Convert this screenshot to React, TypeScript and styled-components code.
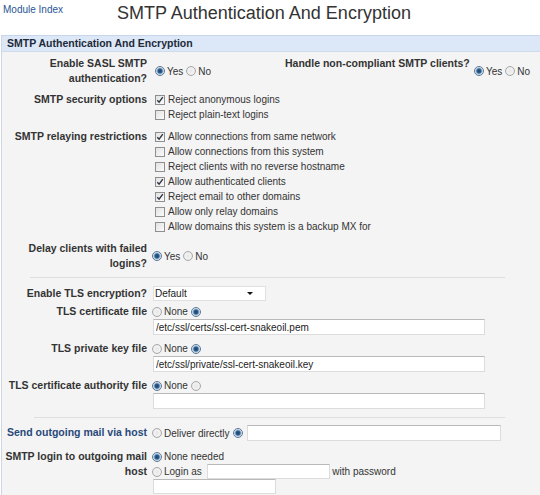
import React from 'react';
import styled, { createGlobalStyle } from 'styled-components';

const GlobalStyle = createGlobalStyle`
  body {
    margin: 0;
    background: #ffffff;
    font-family: "Liberation Sans", Arial, sans-serif;
    font-size: 10px;
    color: #333333;
    overflow: hidden;
  }
`;

const Page = styled.div`
  width: 540px;
  height: 495px;
  overflow: hidden;
`;

const TopBar = styled.div`
  display: grid;
  grid-template-columns: 92px 1fr 104px;
  align-items: start;
  height: 35px;
`;

const ModuleLink = styled.a`
  color: #2a5594;
  text-decoration: none;
  padding: 3px 0 0 3px;
  line-height: 14px;
`;

const Title = styled.h1`
  margin: 0;
  padding-top: 2px;
  font-size: 18px;
  font-weight: normal;
  line-height: 22px;
  text-align: center;
  color: #333333;
  white-space: nowrap;
`;

const Panel = styled.div`
  margin-left: 1px;
  margin-right: -10px;
  border-left: 1px solid #d0d6df;
`;

const PanelHeader = styled.div`
  background: #dce7f7;
  border-top: 1px solid #c8d6ec;
  border-bottom: 1px solid #cfdaea;
  padding: 0 5px;
  height: 15px;
  line-height: 15px;
  font-size: 10.5px;
  font-weight: bold;
  color: #222a38;
`;

const PanelBody = styled.div`
  background: #f4f4f4;
  padding: 1px 0 10px;
`;

const Row = styled.div<{ $cols?: string; $top?: number; $bottom?: number }>`
  display: grid;
  grid-template-columns: ${p => p.$cols || '149px 1fr'};
  padding: ${p => p.$top ?? 3}px 0 ${p => p.$bottom ?? 3}px;
`;

const Label = styled.div<{ $link?: boolean }>`
  text-align: right;
  font-size: 10.5px;
  font-weight: bold;
  padding-right: 4px;
  line-height: 15px;
  white-space: nowrap;
  color: ${p => (p.$link ? '#27497a' : '#333333')};
`;

const Control = styled.div<{ $middle?: boolean; $indent?: number }>`
  display: flex;
  flex-direction: column;
  justify-content: ${p => (p.$middle ? 'center' : 'flex-start')};
  padding-left: ${p => p.$indent ?? 0}px;
`;

const Line = styled.div`
  display: flex;
  align-items: center;
  min-height: 15px;
  line-height: 15px;
  white-space: nowrap;
`;

const RadioDot = styled.span<{ $on?: boolean; $gap?: boolean }>`
  box-sizing: border-box;
  display: inline-block;
  flex: none;
  width: 10px;
  height: 10px;
  margin: 0 2px 0 ${p => (p.$gap ? 3 : 1)}px;
  border-radius: 50%;
  border: 1px solid ${p => (p.$on ? '#5b7896' : '#a9a9a9')};
  background: ${p =>
    p.$on
      ? 'radial-gradient(circle, #1e3f66 0, #2d5f8e 2px, #9ab7d3 3px, #eef2f6 4px)'
      : 'radial-gradient(circle, #e6e6e6 0, #f2f2f2 3px, #dcdcdc 5px)'};
`;

const CheckBox = styled.span`
  box-sizing: border-box;
  display: inline-flex;
  align-items: center;
  justify-content: center;
  flex: none;
  width: 10px;
  height: 10px;
  margin: 0 3px 0 4px;
  border: 1px solid #8f8f8f;
  background: linear-gradient(135deg, #e2e2e2, #fbfbfb);
`;

const TextField = styled.input<{ $w: number; $h?: number }>`
  box-sizing: border-box;
  width: ${p => p.$w}px;
  height: ${p => p.$h ?? 16}px;
  margin: 0 0 0 2px;
  padding: 0 2px;
  border: 1px solid #dcdcdc;
  border-top-color: #b9b9b9;
  background: #ffffff;
  font-family: inherit;
  font-size: 10px;
  color: #222222;
  outline: none;
`;

const SelectBox = styled.span`
  position: relative;
  box-sizing: border-box;
  display: inline-block;
  width: 113px;
  height: 15px;
  line-height: 13px;
  margin-left: 2px;
  padding-left: 1px;
  border: 1px solid #e0e0e0;
  background: #ffffff;
  color: #222222;

  &::after {
    content: '';
    position: absolute;
    right: 12px;
    top: 5px;
    border-left: 3px solid transparent;
    border-right: 3px solid transparent;
    border-top: 3px solid #111111;
  }
`;

const Separator = styled.div<{ $left: number; $top: number; $bottom: number }>`
  height: 1px;
  background: #dedede;
  margin: ${p => p.$top}px 45px ${p => p.$bottom}px ${p => p.$left}px;
`;

const Radio = ({ on, gap }: { on?: boolean; gap?: boolean }) => <RadioDot $on={on} $gap={gap} />;

const Check = ({ on }: { on?: boolean }) => (
  <CheckBox>
    {on && (
      <svg width="8" height="8" viewBox="0 0 8 8">
        <path d="M1.3 4.2 L3.1 6.2 L6.8 1.2" fill="none" stroke="#2b3440" strokeWidth="1.4" />
      </svg>
    )}
  </CheckBox>
);

const relaying: [string, boolean][] = [
  ['Allow connections from same network', true],
  ['Allow connections from this system', false],
  ['Reject clients with no reverse hostname', false],
  ['Allow authenticated clients', true],
  ['Reject email to other domains', true],
  ['Allow only relay domains', false],
  ['Allow domains this system is a backup MX for', false],
];

export default function App() {
  return (
    <Page>
      <GlobalStyle />
      <TopBar>
        <ModuleLink href="#">Module Index</ModuleLink>
        <Title>SMTP Authentication And Encryption</Title>
        <div />
      </TopBar>

      <Panel>
        <PanelHeader>SMTP Authentication And Encryption</PanelHeader>
        <PanelBody>
          <Row $cols="149px 134px 185px 1fr">
            <Label>Enable SASL SMTP<br />authentication?</Label>
            <Control $middle $indent={3}>
              <Line><Radio on />Yes<Radio gap />No</Line>
            </Control>
            <Label>Handle non-compliant SMTP clients?</Label>
            <Control $middle $indent={3}>
              <Line><Radio on />Yes<Radio gap />No</Line>
            </Control>
          </Row>

          <Row>
            <Label>SMTP security options</Label>
            <Control>
              <Line><Check on />Reject anonymous logins</Line>
              <Line><Check />Reject plain-text logins</Line>
            </Control>
          </Row>

          <Row $top={4}>
            <Label>SMTP relaying restrictions</Label>
            <Control>
              {relaying.map(([text, on]) => (
                <Line key={text}><Check on={on} />{text}</Line>
              ))}
            </Control>
          </Row>

          <Row $top={4}>
            <Label>Delay clients with failed<br />logins?</Label>
            <Control $middle>
              <Line><Radio on />Yes<Radio gap />No</Line>
            </Control>
          </Row>

          <Separator $left={28} $top={3} $bottom={5} />

          <Row $bottom={0}>
            <Label>Enable TLS encryption?</Label>
            <Control>
              <Line><SelectBox>Default</SelectBox></Line>
            </Control>
          </Row>

          <Row>
            <Label>TLS certificate file</Label>
            <Control>
              <Line><Radio />None<Radio on gap /></Line>
              <Line><TextField $w={332} defaultValue="/etc/ssl/certs/ssl-cert-snakeoil.pem" /></Line>
            </Control>
          </Row>

          <Row>
            <Label>TLS private key file</Label>
            <Control>
              <Line><Radio />None<Radio on gap /></Line>
              <Line><TextField $w={332} defaultValue="/etc/ssl/private/ssl-cert-snakeoil.key" /></Line>
            </Control>
          </Row>

          <Row>
            <Label>TLS certificate authority file</Label>
            <Control>
              <Line><Radio on />None<Radio gap /></Line>
              <Line><TextField $w={332} defaultValue="" /></Line>
            </Control>
          </Row>

          <Separator $left={32} $top={5} $bottom={4} />

          <Row>
            <Label $link>Send outgoing mail via host</Label>
            <Control>
              <Line>
                <Radio />Deliver directly<Radio on gap />
                <TextField $w={254} defaultValue="" />
              </Line>
            </Control>
          </Row>

          <Row $top={5}>
            <Label>SMTP login to outgoing mail<br />host</Label>
            <Control>
              <Line><Radio on />None needed</Line>
              <Line>
                <Radio />Login as&nbsp;<TextField $w={123} $h={15} defaultValue="" />&nbsp;with password
              </Line>
              <Line><TextField $w={123} $h={15} defaultValue="" /></Line>
            </Control>
          </Row>
        </PanelBody>
      </Panel>
    </Page>
  );
}
